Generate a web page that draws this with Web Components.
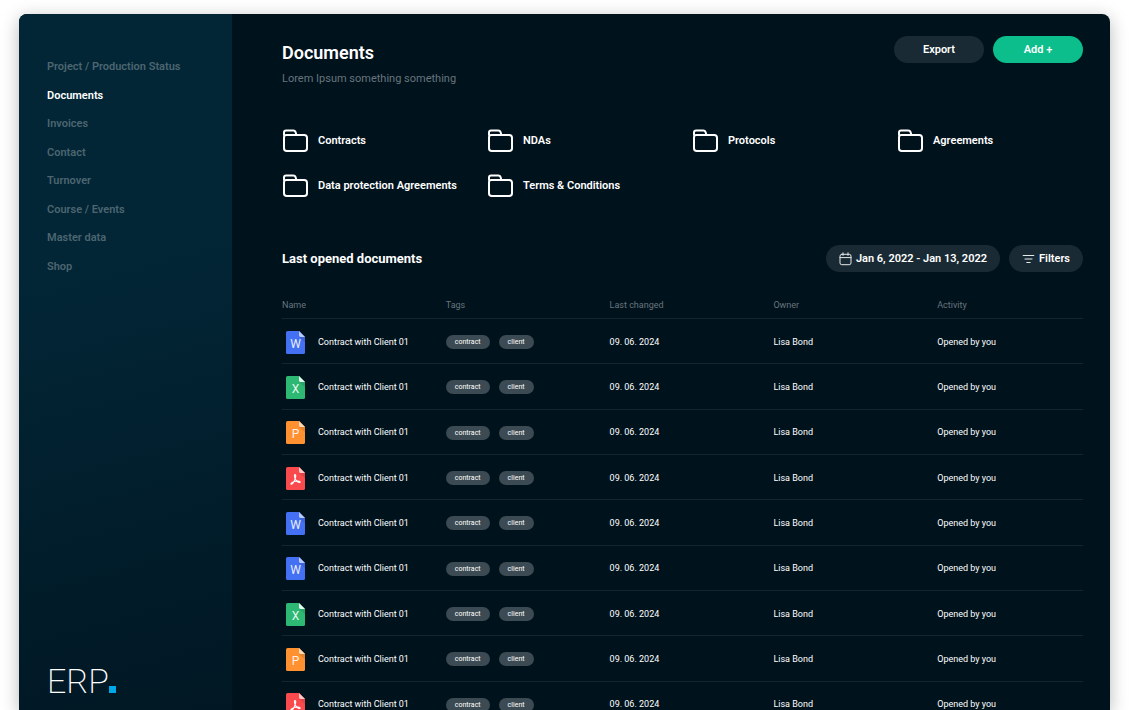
<!DOCTYPE html>
<html lang="en">
<head>
<meta charset="utf-8">
<meta name="viewport" content="width=device-width, initial-scale=1">
<title>ERP – Documents</title>
<style>
  html, body { margin: 0; height: 100%; }
  body { background: #fff; font-family: Roboto, "Liberation Sans", sans-serif; overflow: hidden; }
</style>
</head>
<body>
<erp-app>
  <erp-sidebar slot="sidebar">
    <nav-item>Project / Production Status</nav-item>
    <nav-item active>Documents</nav-item>
    <nav-item>Invoices</nav-item>
    <nav-item>Contact</nav-item>
    <nav-item>Turnover</nav-item>
    <nav-item>Course / Events</nav-item>
    <nav-item>Master data</nav-item>
    <nav-item>Shop</nav-item>
  </erp-sidebar>
  <page-header>
    <span slot="title">Documents</span>
    <span slot="subtitle">Lorem Ipsum something something</span>
    <pill-button slot="actions" wide>Export</pill-button>
    <pill-button slot="actions" wide primary>Add +</pill-button>
  </page-header>
  <folder-grid>
    <folder-link>Contracts</folder-link>
    <folder-link>NDAs</folder-link>
    <folder-link>Protocols</folder-link>
    <folder-link>Agreements</folder-link>
    <folder-link>Data protection Agreements</folder-link>
    <folder-link>Terms &amp; Conditions</folder-link>
  </folder-grid>
  <section-header>
    <span slot="title">Last opened documents</span>
    <pill-button><svg slot="icon" width="13" height="14" viewBox="0 0 13 14" fill="none" stroke="#e4e9eb" stroke-linecap="round"><rect x="1" y="2.3" width="11" height="10.4" rx="1.8"/><path d="M1 5.6H12M4 .8V3.4M9 .8V3.4"/></svg>Jan 6, 2022 - Jan 13, 2022</pill-button>
    <pill-button><svg slot="icon" width="13" height="14" viewBox="0 0 13 14" fill="none" stroke="#e4e9eb" stroke-width="1.1" stroke-linecap="round"><path d="M1.2 3.5H11.8M3 7H10M4.8 10.5H8.2"/></svg>Filters</pill-button>
  </section-header>
  <document-table></document-table>
</erp-app>

<script>
const define = (name, html, setup) => {
  const template = document.createElement('template');
  template.innerHTML = html;
  customElements.define(name, class extends HTMLElement {
    constructor() {
      super();
      this.attachShadow({ mode: 'open' }).append(template.content.cloneNode(true));
    }
    connectedCallback() { if (setup) setup(this, this.shadowRoot); }
  });
};

define('erp-app', `
  <style>
    :host { display: block; box-sizing: border-box; height: 100vh; padding: 14px 19px 0; overflow: hidden; }
    .card { display: flex; height: 100%; border-radius: 8px 8px 0 0; background: #00121c; color: #fff;
            box-shadow: 0 4px 18px rgba(0,0,0,.28); }
    main { flex: 1; min-width: 0; box-sizing: border-box; padding: 22px 27px 0 50px; overflow-y: auto; scrollbar-width: none; }
  </style>
  <div class="card"><slot name="sidebar"></slot><main><slot></slot></main></div>`);

define('erp-sidebar', `
  <style>
    :host { display: flex; flex: 0 0 213px; flex-direction: column; justify-content: space-between; box-sizing: border-box;
            padding: 39px 28px 9px; border-radius: 8px 0 0 0;
            background: linear-gradient(165deg, #022636 0%, #022636 35%, #011a27 85%, #011824 100%); }
    nav { display: grid; grid-auto-rows: 1fr; align-items: center; height: 228px; }
    .logo { display: flex; align-items: baseline; font-size: 34px; line-height: 40px; font-weight: 200; }
    .dot { width: 7px; height: 7px; background: #00a8e8; }
  </style>
  <nav aria-label="Main"><slot></slot></nav>
  <div class="logo">ERP<span class="dot"></span></div>`);

define('nav-item', `
  <style>
    :host { display: block; font-size: 11px; line-height: 16px; font-weight: 600; white-space: nowrap; color: #4c6570; }
    :host([active]) { color: #fff; }
    a { color: inherit; text-decoration: none; }
  </style>
  <a href="#"><slot></slot></a>`, (el, root) => {
  if (el.hasAttribute('active')) root.querySelector('a').setAttribute('aria-current', 'page');
});

define('page-header', `
  <style>
    :host { display: flex; justify-content: space-between; align-items: flex-start; margin-bottom: 41px; }
    h1 { margin: 0; font-size: 18px; line-height: 34px; font-weight: 600; }
    p { margin: 0; font-size: 11px; line-height: 17px; color: #68757c; }
    .actions { display: flex; gap: 9px; }
  </style>
  <div><h1><slot name="title"></slot></h1><p><slot name="subtitle"></slot></p></div>
  <div class="actions"><slot name="actions"></slot></div>`);

define('pill-button', `
  <style>
    :host { display: block; }
    button { display: flex; align-items: center; justify-content: center; gap: 4px; height: 27px; padding: 0 13px;
             border: 0; border-radius: 14px; background: #192a34; color: #fff; font: 600 11px/16px Roboto, "Liberation Sans", sans-serif;
             white-space: nowrap; cursor: pointer; }
    :host([wide]) button { min-width: 90px; }
    :host([primary]) button { background: #0bbe8b; }
  </style>
  <button type="button"><slot name="icon"></slot><slot></slot></button>`);

define('folder-grid', `
  <style>
    :host { display: grid; grid-template-columns: repeat(4, minmax(0, 1fr)); column-gap: 19px; row-gap: 19px; margin-bottom: 46px; }
  </style>
  <slot></slot>`);

define('folder-link', `
  <style>
    :host { display: block; }
    a { display: flex; align-items: center; gap: 10px; height: 26px; color: #fff; text-decoration: none;
        font-size: 11px; line-height: 16px; font-weight: 600; white-space: nowrap; }
    svg { flex: none; }
  </style>
  <a href="#">
    <svg width="26" height="24" viewBox="0 0 26 24" fill="none" stroke="#fff" stroke-width="2" stroke-linejoin="round" aria-hidden="true">
      <path d="M2 6.5V3.6Q2 1.5 4.1 1.5H11.2Q13 1.5 13.6 3.2L14.4 6H22.2Q25 6 25 8.8V19.2Q25 22 22.2 22H4.8Q2 22 2 19.2V8.4Q2 6 4.4 6H14.4"/>
    </svg>
    <slot></slot>
  </a>`);

define('section-header', `
  <style>
    :host { display: flex; align-items: center; gap: 9px; margin-bottom: 20px; }
    h2 { flex: 1; margin: 0; font-size: 13px; line-height: 20px; font-weight: 700; }
  </style>
  <h2><slot name="title"></slot></h2><slot></slot>`);

define('tag-chip', `
  <style>
    :host { display: inline-block; padding: 0 9px; border-radius: 7px; background: #3c4a53; color: #fff; font-size: 7px; line-height: 14px; }
  </style>
  <slot></slot>`);

const fileKinds = {
  word: ['#4471f3', '#b9caff', 'W'],
  excel: ['#2db873', '#e2fff0', 'X'],
  powerpoint: ['#ff9131', '#ffdcb8', 'P'],
  pdf: ['#fb4a4d', '#ffc9ca', '']
};

define('file-icon', `
  <style>:host { display: block; width: 19px; height: 23px; } svg { display: block; }</style>
  <div></div>`, (el, root) => {
  const [fill, fold, letter] = fileKinds[el.getAttribute('kind')];
  const mark = letter
    ? `<text x="9.5" y="17.4" text-anchor="middle" font-size="12" fill="#fff" fill-opacity=".9">${letter}</text>`
    : `<path d="M8.8 7.6C10.4 7.2 9.6 11 8.7 12.9C7.8 14.9 6.1 17.4 5.2 17.2C4.2 16.8 6.2 15.2 8.3 14.5C10.6 13.8 14.2 13.9 14.2 15C14.1 16.2 11.2 15.1 9.9 13.1C8.8 11.5 8 8 8.8 7.6Z" fill="none" stroke="#fff" stroke-width="1.1"/>`;
  root.querySelector('div').innerHTML = `<svg width="19" height="23" viewBox="0 0 19 23" role="img" aria-label="${el.getAttribute('kind')} file">
    <path d="M1.6 0H13L19 6V21.4Q19 23 17.4 23H1.6Q0 23 0 21.4V1.6Q0 0 1.6 0Z" fill="${fill}"/>
    <path d="M13 6H19V11.5Z" fill="#000" opacity=".1"/>
    <path d="M13 0L19 6H14.4Q13 6 13 4.6Z" fill="${fold}"/>${mark}</svg>`;
});

define('document-table', `
  <style>
    :host { display: block; }
    table { width: 100%; height: 435px; table-layout: fixed; border-collapse: collapse; font-size: 9px; line-height: 13px; }
    col { width: 20.45%; }
    col:last-child { width: 18.2%; }
    th, td { padding: 0; text-align: left; vertical-align: middle; border-bottom: 1px solid #14252f; white-space: nowrap; }
    th { height: 26px; font-weight: 400; color: #68757c; }
    td { height: 42px; padding-top: 2px; color: #fff; }
    .name { display: flex; align-items: center; gap: 13px; padding-left: 4px; }
    .tags { display: flex; gap: 9px; }
  </style>
  <table>
    <colgroup><col><col><col><col><col></colgroup>
    <thead><tr><th scope="col">Name</th><th scope="col">Tags</th><th scope="col">Last changed</th><th scope="col">Owner</th><th scope="col">Activity</th></tr></thead>
    <tbody></tbody>
  </table>`, (el, root) => {
  const kinds = ['word', 'excel', 'powerpoint', 'pdf', 'word', 'word', 'excel', 'powerpoint', 'pdf'];
  root.querySelector('tbody').innerHTML = kinds.map(kind => `
    <tr>
      <td><div class="name"><file-icon kind="${kind}"></file-icon>Contract with Client 01</div></td>
      <td><div class="tags"><tag-chip>contract</tag-chip><tag-chip>client</tag-chip></div></td>
      <td>09. 06. 2024</td><td>Lisa Bond</td><td>Opened by you</td>
    </tr>`).join('');
});
</script>
</body>
</html>
